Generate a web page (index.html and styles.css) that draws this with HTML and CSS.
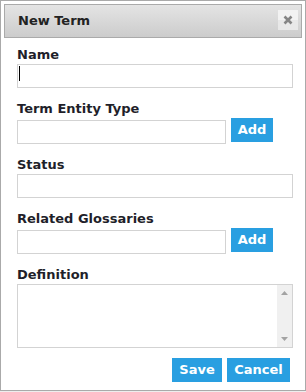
FILE: index.html
```html
<!DOCTYPE html>
<html>
<head>
<meta charset="utf-8">
<link rel="stylesheet" href="styles.css">
</head>
<body>
<div class="dialog">
  <div class="titlebar">
    <span class="title">New Term</span>
    <button class="close" type="button" aria-label="Close">
      <svg width="10" height="10" viewBox="0 0 10 10"><path d="M1.5 1.5L8.5 8.5M8.5 1.5L1.5 8.5" stroke="#858585" stroke-width="2.6"/></svg>
    </button>
  </div>
  <div class="content">
    <div class="field first">
      <label class="label">Name</label>
      <div class="caret-wrap">
        <input class="input full" type="text">
      </div>
    </div>
    <div class="field">
      <label class="label">Term Entity Type</label>
      <div class="row">
        <input class="input short" type="text">
        <button class="btn add" type="button">Add</button>
      </div>
    </div>
    <div class="field">
      <label class="label">Status</label>
      <input class="input full" type="text">
    </div>
    <div class="field">
      <label class="label">Related Glossaries</label>
      <div class="row">
        <input class="input short" type="text">
        <button class="btn add" type="button">Add</button>
      </div>
    </div>
    <div class="field">
      <label class="label">Definition</label>
      <div class="textarea-wrap">
        <textarea class="textarea"></textarea>
        <div class="scrollbar" aria-hidden="true">
          <svg class="arrow" width="7" height="4" viewBox="0 0 7 4"><path d="M0 4L3.5 0L7 4Z" fill="#a3a3a3"/></svg>
          <svg class="arrow" width="7" height="4" viewBox="0 0 7 4"><path d="M0 0L7 0L3.5 4Z" fill="#a3a3a3"/></svg>
        </div>
      </div>
    </div>
    <div class="actions">
      <button class="btn save" type="button">Save</button>
      <button class="btn cancel" type="button">Cancel</button>
    </div>
  </div>
</div>
</body>
</html>
```
FILE: styles.css
```css
html { background: #eeeeee; }
body {
  margin: 0;
  font-family: "DejaVu Sans", Verdana, sans-serif;
  font-size: 13px;
  color: #222;
}
.dialog {
  box-sizing: border-box;
  width: 306px;
  height: 391px;
  border: 1px solid #aaaaaa;
  padding: 3px;
  background: #ffffff;
}
.titlebar {
  box-sizing: border-box;
  height: 34px;
  border: 1px solid #aaaaaa;
  background: linear-gradient(#e4e4e4, #cccccc);
  display: flex;
  align-items: center;
  justify-content: space-between;
  padding: 0 3px 0 13px;
}
.title {
  font-weight: bold;
  color: #222;
  line-height: 16px;
}
.close {
  width: 20px;
  height: 20px;
  padding: 0;
  border: none;
  background: linear-gradient(#f2f2f2 50%, #e8e8e8 50%);
  display: flex;
  align-items: center;
  justify-content: center;
  margin-top: -2px;
}
.content {
  padding: 9px 9px 0 13px;
}
.field { margin-top: 13px; }
.field.first { margin-top: 0; }
.label {
  display: block;
  font-weight: bold;
  line-height: 16px;
  margin-bottom: 1px;
  color: #1f1f2a;
}
.caret-wrap {
  position: relative;
  width: 276px;
}
.caret-wrap::after {
  content: "";
  position: absolute;
  left: 2px;
  top: 2px;
  width: 1px;
  height: 15px;
  background: #000;
}
.input {
  box-sizing: border-box;
  height: 24px;
  border: 1px solid #d3d3d3;
  margin: 0;
  padding: 0 2px;
  font: inherit;
  display: block;
  outline: none;
  background: #fff;
}
.input.full { width: 276px; }
.input.short { width: 209px; margin-top: 2px; }
.row {
  display: flex;
  align-items: flex-start;
  gap: 5px;
  margin-top: 1px;
}
.btn {
  box-sizing: border-box;
  height: 24px;
  border: none;
  padding: 0;
  background: #299fe1;
  color: #ffffff;
  font: inherit;
  font-weight: bold;
  line-height: 24px;
}
.btn.add { width: 42px; }
.btn.save { width: 50px; }
.btn.cancel { width: 63px; }
.textarea-wrap {
  position: relative;
  width: 276px;
  margin-top: 1px;
}
.textarea {
  box-sizing: border-box;
  display: block;
  width: 276px;
  height: 64px;
  margin: 0;
  border: 1px solid #d3d3d3;
  resize: none;
  overflow: hidden;
  font: inherit;
  outline: none;
}
.scrollbar {
  position: absolute;
  top: 1px;
  right: 1px;
  bottom: 1px;
  width: 15px;
  background: #f0f0f0;
  display: flex;
  flex-direction: column;
  justify-content: space-between;
  align-items: center;
  padding: 6px 0 6px;
  box-sizing: border-box;
}
.arrow { display: block; }
.actions {
  display: flex;
  justify-content: flex-end;
  gap: 5px;
  margin-top: 10px;
  padding-right: 3px;
}
```
